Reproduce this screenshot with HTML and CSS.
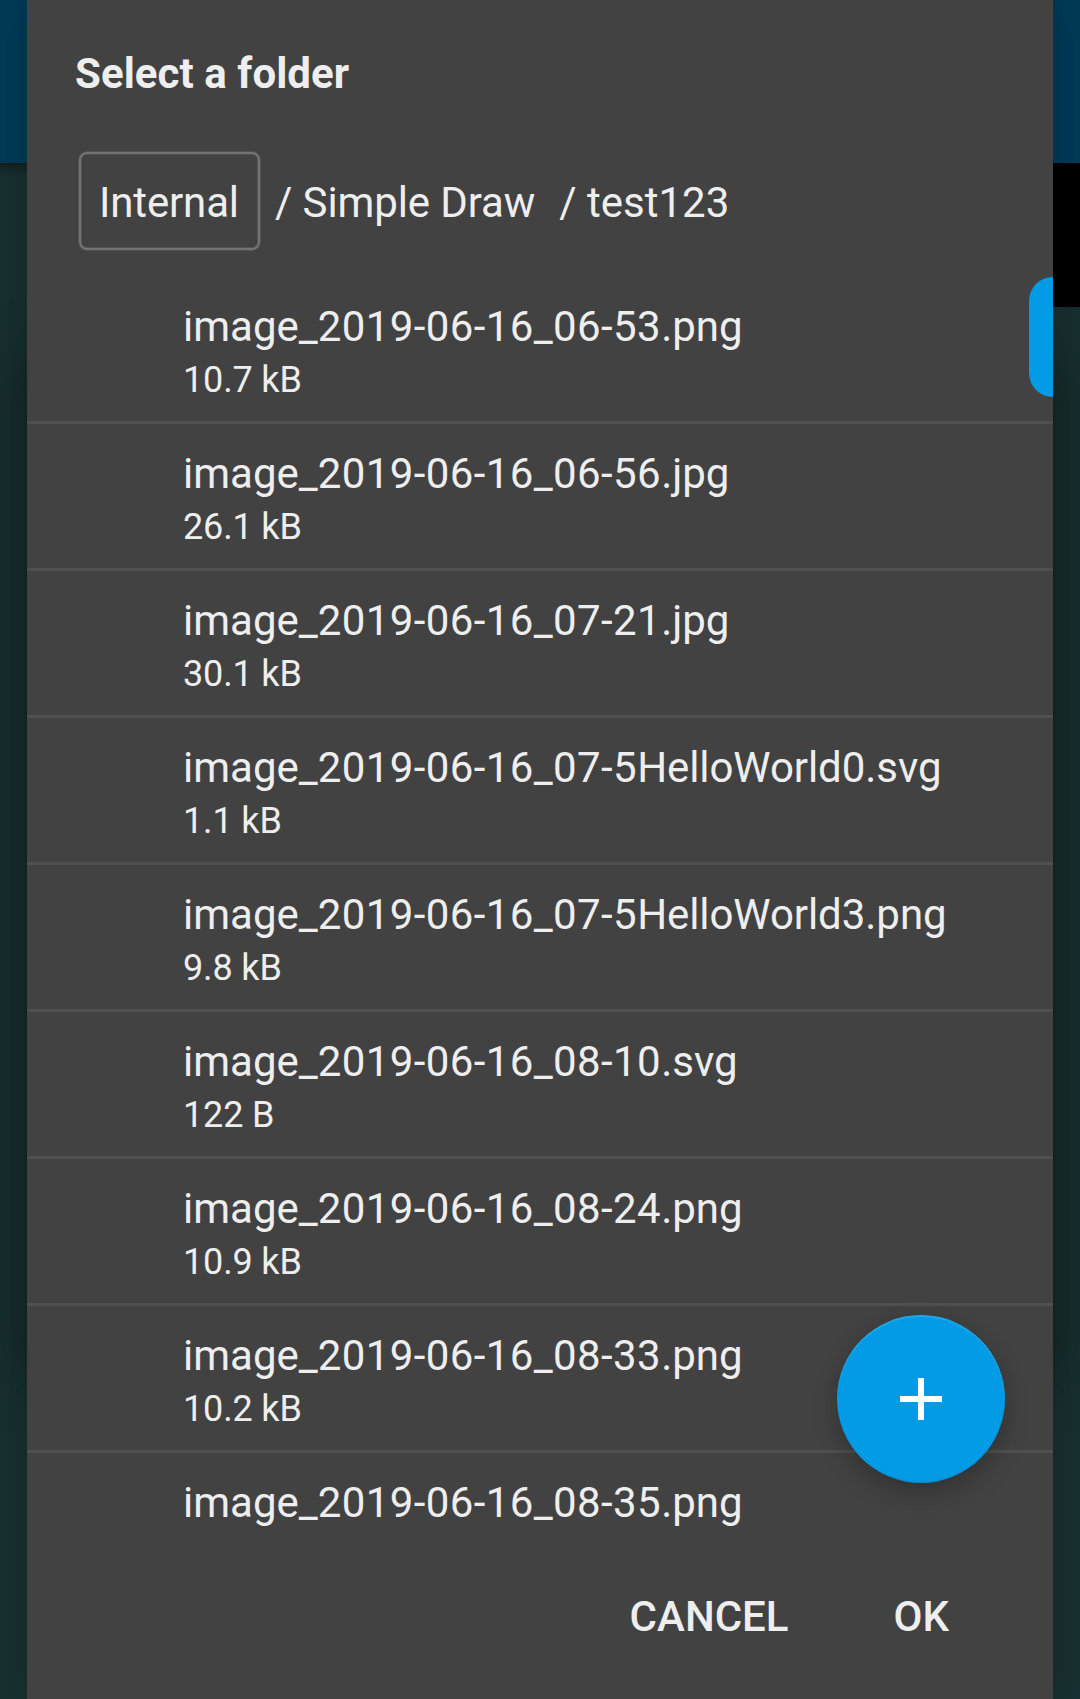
FILE: index.html
```html
<!DOCTYPE html>
<html lang="en">
<head>
<meta charset="utf-8">
<title>Select a folder</title>
<link rel="stylesheet" href="styles.css">
</head>
<body>
<div class="screen">
  <div class="menu-shade"></div>
  <main class="dialog">
    <h1 class="title">Select a folder</h1>
    <nav class="breadcrumbs">
      <span class="crumb crumb-root">Internal</span>
      <span class="crumb crumb-first">/ Simple Draw</span>
      <span class="crumb crumb-last">/ test123</span>
    </nav>
    <div class="list-area">
      <ul class="files">
        <li class="file"><span class="name">image_<span class="stamp">2019-06-16_06-53</span>.png</span><span class="size">10.7 kB</span></li>
        <li class="file"><span class="name">image_<span class="stamp">2019-06-16_06-56</span>.jpg</span><span class="size">26.1 kB</span></li>
        <li class="file"><span class="name">image_<span class="stamp">2019-06-16_07-21</span>.jpg</span><span class="size">30.1 kB</span></li>
        <li class="file"><span class="name">image_<span class="stamp">2019-06-16_07-5</span><span class="label">HelloWorld</span>0.svg</span><span class="size">1.1 kB</span></li>
        <li class="file"><span class="name">image_<span class="stamp">2019-06-16_07-5</span><span class="label">HelloWorld</span>3.png</span><span class="size">9.8 kB</span></li>
        <li class="file"><span class="name">image_<span class="stamp">2019-06-16_08-10</span>.svg</span><span class="size">122 B</span></li>
        <li class="file"><span class="name">image_<span class="stamp">2019-06-16_08-24</span>.png</span><span class="size">10.9 kB</span></li>
        <li class="file"><span class="name">image_<span class="stamp">2019-06-16_08-33</span>.png</span><span class="size">10.2 kB</span></li>
        <li class="file"><span class="name">image_<span class="stamp">2019-06-16_08-35</span>.png</span></li>
      </ul>
      <div class="scroll-handle"></div>
      <button class="fab" aria-label="Create new folder">
        <svg width="42" height="42" viewBox="0 0 42 42"><path d="M18 0h6v18h18v6H24v18h-6V24H0v-6h18z" fill="#fff"/></svg>
      </button>
    </div>
    <footer class="actions">
      <button class="action">CANCEL</button>
      <button class="action">OK</button>
    </footer>
  </main>
</div>
</body>
</html>
```
FILE: styles.css
```css
* { box-sizing: border-box; }

body {
  margin: 0;
  font-family: Roboto, sans-serif;
  color: #eee;
}

.screen {
  position: relative;
  height: 1699px;
  padding: 0 27px;
  overflow: hidden;
  background: linear-gradient(#003a58 163px, #13201f 163px, #183031 176px, #183031);
}

/* Part of the overflow menu left visible beside the dialog */
.menu-shade {
  position: absolute;
  top: 163px;
  right: 0;
  width: 540px;
  height: 144px;
  background: #000;
}

/* Ambient shadow along the dialog's sides */
.screen::before {
  content: "";
  position: absolute;
  left: 27px;
  top: 360px;
  width: 1026px;
  height: 1010px;
  box-shadow: 0 0 50px rgba(16, 24, 16, .6);
}

.dialog {
  position: relative;
  display: flex;
  flex-direction: column;
  height: 1699px;
  background: #424242;
  box-shadow: 0 0 40px rgba(0, 0, 0, .22);
}

.title {
  margin: 0;
  padding: 49px 48px 0;
  height: 150px;
  font-size: 42px;
  line-height: 49px;
  font-weight: 700;
  letter-spacing: .06px;
}

.breadcrumbs {
  display: flex;
  align-items: flex-start;
  height: 127px;
  padding: 2px 0 0 52px;
  font-size: 42px;
  line-height: 49px;
}

.crumb {
  padding-top: 26px;
  white-space: pre;
}

.crumb-root {
  width: 181px;
  height: 98px;
  padding: 24px 0 0 18px;
  border: 2px solid #747474;
  border-radius: 8px;
  box-shadow: 0 0 0 1px #525252, inset 0 0 0 1px #525252;
  letter-spacing: -.15px;
}

.crumb-first {
  margin-left: 15px;
  letter-spacing: -.1px;
}

.crumb-last { margin-left: 24px; }

.list-area {
  position: relative;
  height: 1258px;
}

.files {
  height: 100%;
  margin: 0;
  padding: 0;
  overflow: hidden;
  list-style: none;
}

.file {
  display: flex;
  flex-direction: column;
  height: 147px;
  padding: 25px 0 0 156px;
  border-bottom: 3px solid #505050;
}

.file:last-child { border-bottom: 0; }

.name {
  font-size: 42px;
  line-height: 49px;
}

.stamp { letter-spacing: .4px; }
.label { letter-spacing: -.08px; }

.size {
  margin-top: 8px;
  font-size: 36px;
  line-height: 42px;
  letter-spacing: -.15px;
}

.scroll-handle {
  position: absolute;
  top: 0;
  right: 0;
  width: 24px;
  height: 120px;
  border-radius: 24px 0 0 24px;
  background: #039be5;
}

.fab {
  position: absolute;
  right: 48px;
  bottom: 52px;
  display: flex;
  align-items: center;
  justify-content: center;
  width: 168px;
  height: 168px;
  padding: 0;
  border: 0;
  border-radius: 50%;
  background: #039be5;
  box-shadow: 0 12px 26px rgba(0, 0, 0, .18), 0 2px 18px rgba(0, 0, 0, .07),
    inset 0 2px 1px rgba(255, 255, 255, .12), inset 0 -2px 1px rgba(0, 0, 0, .06);
}

.actions {
  display: flex;
  justify-content: flex-end;
  gap: 105px;
  padding: 57px 104px 0 0;
}

.action {
  padding: 0;
  border: 0;
  background: none;
  color: inherit;
  font: 500 42px/49px Roboto, sans-serif;
}
```
